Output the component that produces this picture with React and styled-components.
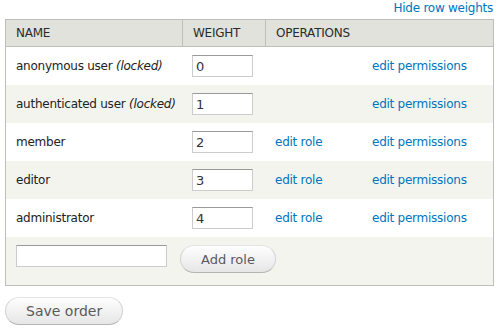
import React from 'react';
import styled, { createGlobalStyle } from 'styled-components';

const GlobalStyle = createGlobalStyle`
    body {
        margin: 0;
        background: #fff;
        font-family: "DejaVu Sans", Verdana, sans-serif;
        font-size: 12px;
        color: #333;
    }
`

const roles = [
    { name: 'anonymous user', locked: true, weight: 0 },
    { name: 'authenticated user', locked: true, weight: 1 },
    { name: 'member', weight: 2 },
    { name: 'editor', weight: 3 },
    { name: 'administrator', weight: 4 },
];

function App() {
    return (
        <Page>
            <GlobalStyle />
            <TopLinks>
                <Link href="#">Hide row weights</Link>
            </TopLinks>
            <Table>
                <HeadRow>
                    <HeadCell>Name</HeadCell>
                    <HeadCell divider>Weight</HeadCell>
                    <HeadCell divider wide>Operations</HeadCell>
                </HeadRow>
                {roles.map((role, i) => (
                    <Row key={role.name} even={i % 2 === 1}>
                        <Cell>
                            {role.name}
                            {role.locked && <Locked> (locked)</Locked>}
                        </Cell>
                        <Cell>
                            <WeightInput defaultValue={role.weight} />
                        </Cell>
                        <Cell>{!role.locked && <Link href="#">edit role</Link>}</Cell>
                        <Cell><Link href="#">edit permissions</Link></Cell>
                    </Row>
                ))}
                <AddRow>
                    <NameInput />
                    <Button>Add role</Button>
                </AddRow>
            </Table>
            <Actions>
                <Button large>Save order</Button>
            </Actions>
        </Page>
    )
};

export default App

const Page = styled.div`
    width: 489px;
    padding: 0 5px;
    letter-spacing: -0.25px;
`

const TopLinks = styled.div`
    height: 19px;
    display: flex;
    justify-content: flex-end;
    align-items: flex-start;
    line-height: 16px;
    padding-right: 1px;
`

const Link = styled.a`
    color: #0074bd;
    text-decoration: none;
`

const Table = styled.div`
    border: 1px solid #bebfb9;
`

const HeadRow = styled.div`
    display: grid;
    grid-template-columns: 176px 83px 97px 131px;
    height: 27px;
    background: #e1e2dc;
    border-bottom: 1px solid #bebfb9;
    box-sizing: border-box;
`

const HeadCell = styled.div`
    display: flex;
    align-items: center;
    padding: 0 10px;
    box-sizing: border-box;
    text-transform: uppercase;
    color: #2b2b2b;
    border-left: ${props => props.divider ? '1px solid #bebfb9' : 'none'};
    grid-column: ${props => props.wide ? 'span 2' : 'auto'};
`

const Row = styled.div`
    display: grid;
    grid-template-columns: 176px 83px 97px 131px;
    height: 38px;
    background: ${props => props.even ? '#f3f4ee' : '#fff'};
`

const Cell = styled.div`
    display: flex;
    align-items: center;
    padding: 0 10px;
    white-space: nowrap;
    color: #222;
`

const Locked = styled.em`
    white-space: pre;
`

const WeightInput = styled.input`
    box-sizing: border-box;
    width: 61px;
    height: 22px;
    padding: 2px 3px;
    border: 1px solid #ccc;
    border-top-color: #999;
    font-family: inherit;
    font-size: 13px;
    color: #333;
    outline: none;
`

const AddRow = styled.div`
    display: flex;
    align-items: flex-start;
    gap: 13px;
    height: 48px;
    box-sizing: border-box;
    padding: 8px 10px 0;
    background: #f3f4ee;
`

const NameInput = styled(WeightInput)`
    width: 151px;
`

const Button = styled.button`
    box-sizing: border-box;
    height: 28px;
    padding: 0 20px;
    border: 1px solid #d2d2d2;
    border-top-color: #e4e4e4;
    border-bottom-color: #b4b4b4;
    border-radius: 20px;
    background: linear-gradient(#fefefe, #e6e6e6);
    font-family: inherit;
    font-size: ${props => props.large ? '14px' : '13px'};
    letter-spacing: 0;
    color: #5a5a5a;
    cursor: pointer;
`

const Actions = styled.div`
    padding-top: 11px;
`
